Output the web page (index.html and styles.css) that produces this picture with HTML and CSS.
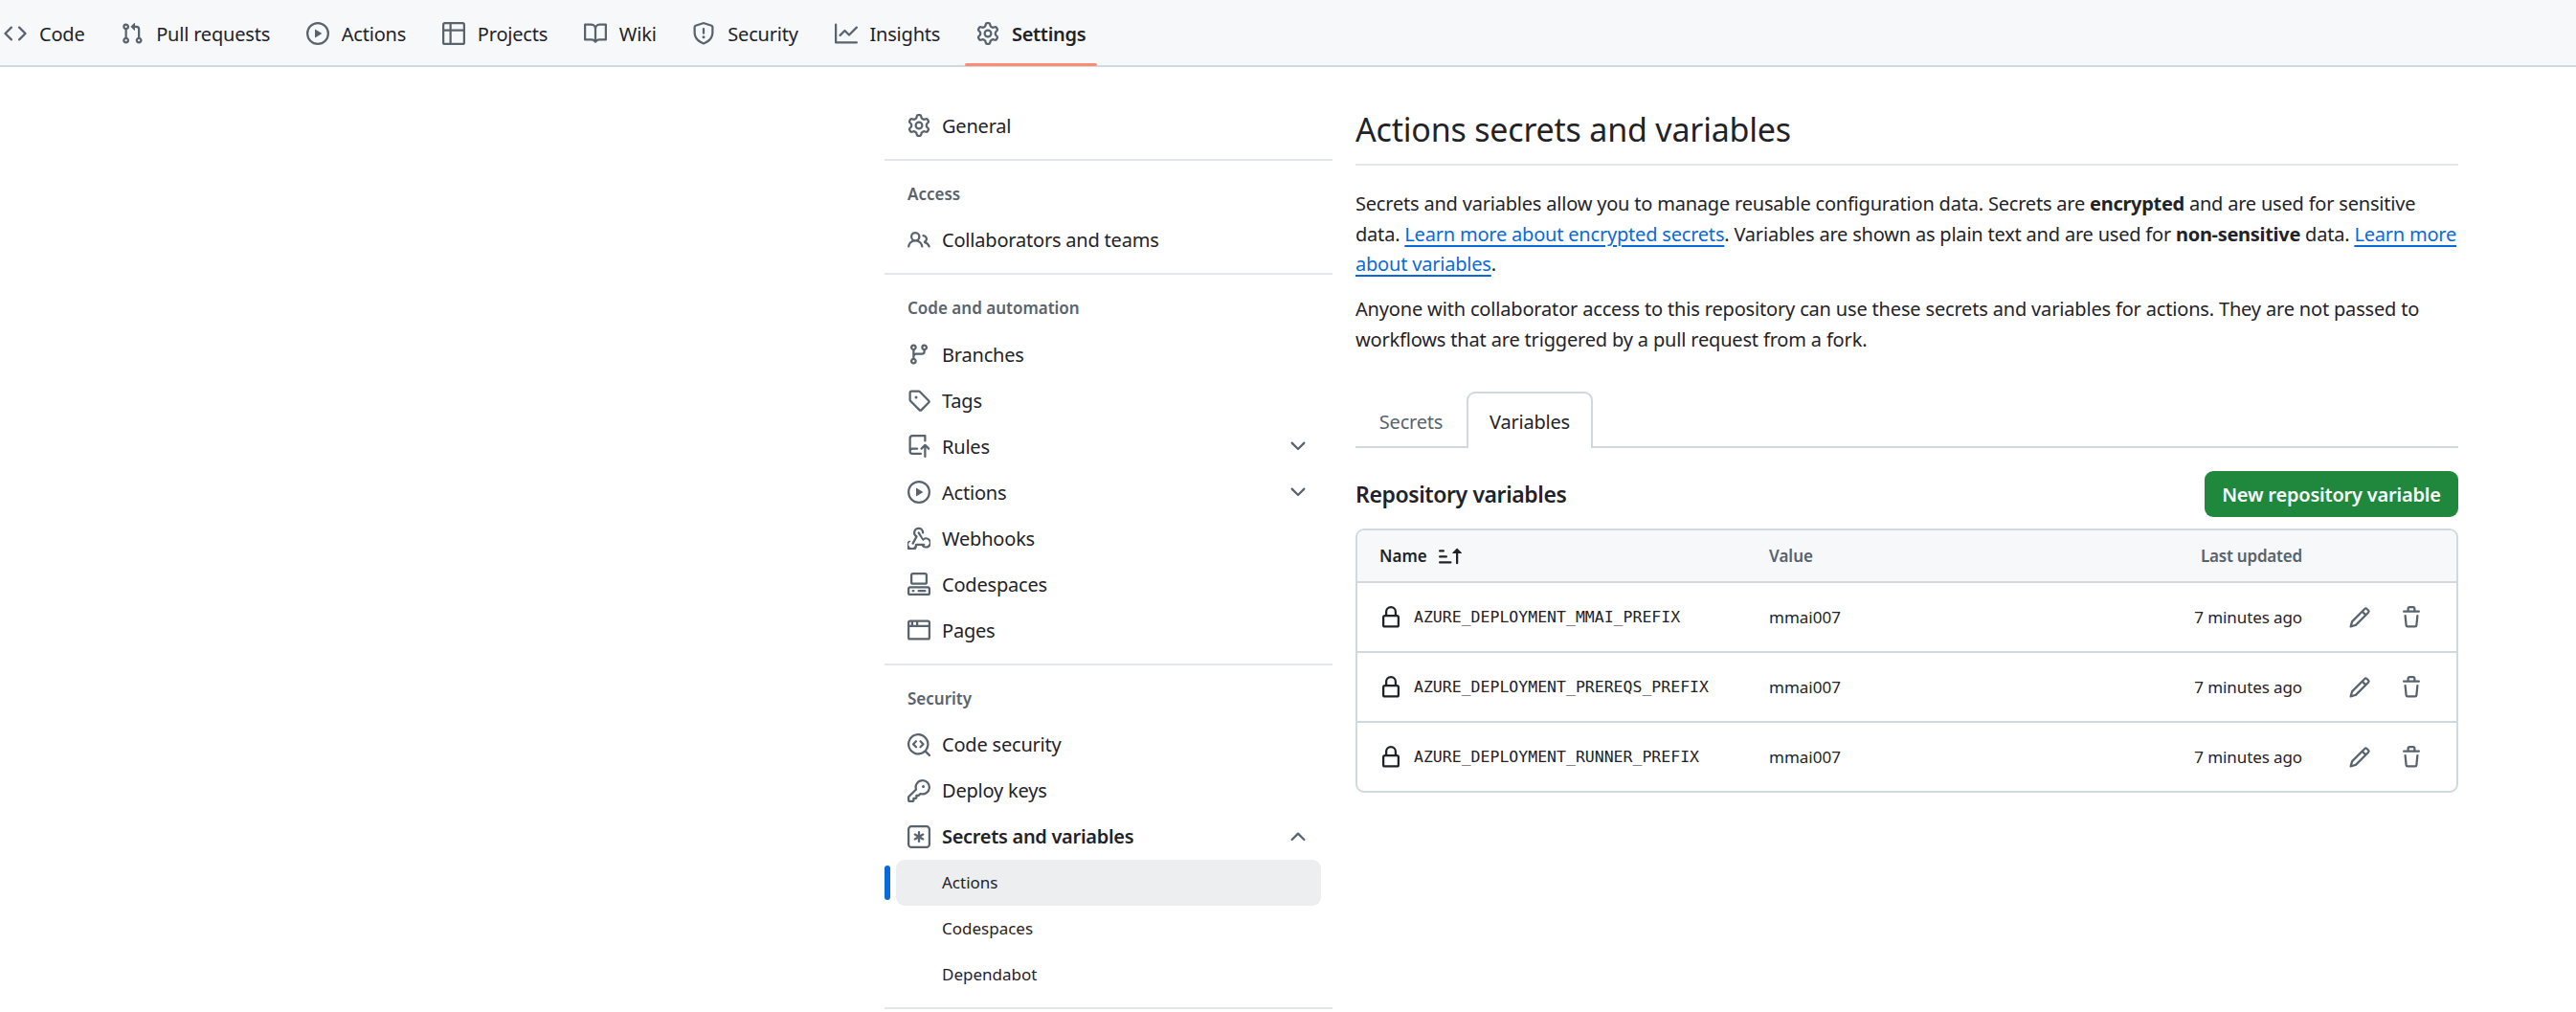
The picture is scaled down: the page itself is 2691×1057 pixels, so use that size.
FILE: index.html
```html
<!DOCTYPE html>
<html lang="en">
<head>
<meta charset="utf-8">
<title>Actions secrets and variables</title>
<link rel="stylesheet" href="styles.css">
</head>
<body>
<svg class="sprite" aria-hidden="true">
<symbol id="i-code" viewBox="0 0 16 16"><path d="m11.28 3.22 4.25 4.25a.75.75 0 0 1 0 1.06l-4.25 4.25a.749.749 0 0 1-1.275-.326.749.749 0 0 1 .215-.734L13.94 8l-3.72-3.72a.749.749 0 0 1 .326-1.275.749.749 0 0 1 .734.215Zm-6.56 0a.751.751 0 0 1 1.042.018.751.751 0 0 1 .018 1.042L2.06 8l3.72 3.72a.749.749 0 0 1-.326 1.275.749.749 0 0 1-.734-.215L.47 8.53a.75.75 0 0 1 0-1.06Z"/></symbol>
<symbol id="i-pr" viewBox="0 0 16 16"><path d="M1.5 3.25a2.25 2.25 0 1 1 3 2.122v5.256a2.251 2.251 0 1 1-1.5 0V5.372A2.25 2.25 0 0 1 1.5 3.25Zm5.677-.177L9.573.677A.25.25 0 0 1 10 .854V2.5h1A2.5 2.5 0 0 1 13.5 5v5.628a2.251 2.251 0 1 1-1.5 0V5a1 1 0 0 0-1-1h-1v1.646a.25.25 0 0 1-.427.177L7.177 3.427a.25.25 0 0 1 0-.354ZM3.75 2.5a.75.75 0 1 0 0 1.5.75.75 0 0 0 0-1.5Zm0 9.5a.75.75 0 1 0 0 1.5.75.75 0 0 0 0-1.5Zm8.25.75a.75.75 0 1 0 1.5 0 .75.75 0 0 0-1.5 0Z"/></symbol>
<symbol id="i-play" viewBox="0 0 16 16"><path d="M8 0a8 8 0 1 1 0 16A8 8 0 0 1 8 0ZM1.5 8a6.5 6.5 0 1 0 13 0 6.5 6.5 0 0 0-13 0Zm4.879-2.773 4.264 2.559a.25.25 0 0 1 0 .428l-4.264 2.559A.25.25 0 0 1 6 10.559V5.442a.25.25 0 0 1 .379-.215Z"/></symbol>
<symbol id="i-table" viewBox="0 0 16 16"><path d="M0 1.75C0 .784.784 0 1.75 0h12.5C15.216 0 16 .784 16 1.75v12.5A1.75 1.75 0 0 1 14.25 16H1.75A1.75 1.75 0 0 1 0 14.25ZM6.5 6.5v8h7.75a.25.25 0 0 0 .25-.25V6.5Zm8-1.5V1.75a.25.25 0 0 0-.25-.25H6.5V5Zm-13 1.5v7.75c0 .138.112.25.25.25H5v-8ZM5 5V1.5H1.75a.25.25 0 0 0-.25.25V5Z"/></symbol>
<symbol id="i-book" viewBox="0 0 16 16"><path d="M0 1.75A.75.75 0 0 1 .75 1h4.253c1.227 0 2.317.59 3 1.501A3.743 3.743 0 0 1 11.006 1h4.245a.75.75 0 0 1 .75.75v10.5a.75.75 0 0 1-.75.75h-4.507a2.25 2.25 0 0 0-1.591.659l-.622.621a.75.75 0 0 1-1.06 0l-.622-.621A2.25 2.25 0 0 0 5.258 13H.75a.75.75 0 0 1-.75-.75Zm7.251 10.324.004-5.073-.002-2.253A2.25 2.25 0 0 0 5.003 2.5H1.5v9h3.757a3.75 3.75 0 0 1 1.994.574ZM8.755 4.75l-.004 7.322a3.752 3.752 0 0 1 1.992-.572H14.5v-9h-3.495a2.25 2.25 0 0 0-2.25 2.25Z"/></symbol>
<symbol id="i-shield" viewBox="0 0 16 16"><path d="M7.467.133a1.748 1.748 0 0 1 1.066 0l5.25 1.68A1.75 1.75 0 0 1 15 3.48V7c0 1.566-.32 3.182-1.303 4.682-.983 1.498-2.585 2.813-5.032 3.855a1.697 1.697 0 0 1-1.33 0c-2.447-1.042-4.049-2.357-5.032-3.855C1.32 10.182 1 8.566 1 7V3.48a1.75 1.75 0 0 1 1.217-1.667Zm.61 1.429a.25.25 0 0 0-.153 0l-5.25 1.68a.25.25 0 0 0-.174.238V7c0 1.358.275 2.666 1.057 3.86.784 1.194 2.121 2.34 4.366 3.297a.196.196 0 0 0 .154 0c2.245-.956 3.582-2.104 4.366-3.298C13.225 9.666 13.5 8.36 13.5 7V3.48a.251.251 0 0 0-.174-.237l-5.25-1.68ZM8.75 4.75v3a.75.75 0 0 1-1.5 0v-3a.75.75 0 0 1 1.5 0ZM9 10.5a1 1 0 1 1-2 0 1 1 0 0 1 2 0Z"/></symbol>
<symbol id="i-graph" viewBox="0 0 16 16"><path d="M1.5 1.75V13.5h13.75a.75.75 0 0 1 0 1.5H.75a.75.75 0 0 1-.75-.75V1.75a.75.75 0 0 1 1.5 0Zm14.28 2.53-5.25 5.25a.75.75 0 0 1-1.06 0L7 7.06 4.28 9.78a.751.751 0 0 1-1.042-.018.751.751 0 0 1-.018-1.042l3.25-3.25a.75.75 0 0 1 1.06 0L10 7.94l4.72-4.72a.751.751 0 0 1 1.042.018.751.751 0 0 1 .018 1.042Z"/></symbol>
<symbol id="i-gear" viewBox="0 0 16 16"><path d="M8 0a8.2 8.2 0 0 1 .701.031C9.444.095 9.99.645 10.16 1.29l.288 1.107c.018.066.079.158.212.224.231.114.454.243.668.386.123.082.233.09.299.071l1.103-.303c.644-.176 1.392.021 1.82.63.27.385.506.792.704 1.218.315.675.111 1.422-.364 1.891l-.814.806c-.049.048-.098.147-.088.294.016.257.016.515 0 .772-.01.147.038.246.088.294l.814.806c.475.469.679 1.216.364 1.891a7.977 7.977 0 0 1-.704 1.217c-.428.61-1.176.807-1.82.63l-1.102-.302c-.067-.019-.177-.011-.3.071a5.909 5.909 0 0 1-.668.386c-.133.066-.194.158-.211.224l-.29 1.106c-.168.646-.715 1.196-1.458 1.26a8.006 8.006 0 0 1-1.402 0c-.743-.064-1.289-.614-1.458-1.26l-.289-1.106c-.018-.066-.079-.158-.212-.224a5.738 5.738 0 0 1-.668-.386c-.123-.082-.233-.09-.299-.071l-1.103.303c-.644.176-1.392-.021-1.82-.63a8.12 8.12 0 0 1-.704-1.218c-.315-.675-.111-1.422.363-1.891l.815-.806c.05-.048.098-.147.088-.294a6.214 6.214 0 0 1 0-.772c.01-.147-.038-.246-.088-.294l-.815-.806C.635 6.045.431 5.298.746 4.623a7.92 7.92 0 0 1 .704-1.217c.428-.61 1.176-.807 1.82-.63l1.102.302c.067.019.177.011.3-.071.214-.143.437-.272.668-.386.133-.066.194-.158.211-.224l.29-1.106C6.009.645 6.556.095 7.299.03 7.53.01 7.764 0 8 0Zm-.571 1.525c-.036.003-.108.036-.137.146l-.289 1.105c-.147.561-.549.967-.998 1.189-.173.086-.34.183-.5.29-.417.278-.97.423-1.529.27l-1.103-.303c-.109-.03-.175.016-.195.045-.22.312-.412.644-.573.99-.014.031-.021.11.059.19l.815.806c.411.406.562.957.53 1.456a4.709 4.709 0 0 0 0 .582c.032.499-.119 1.05-.53 1.456l-.815.806c-.081.08-.073.159-.059.19.162.346.353.677.573.989.02.03.085.076.195.046l1.102-.303c.56-.153 1.113-.008 1.53.27.161.107.328.204.501.29.447.222.85.629.997 1.189l.289 1.105c.029.109.101.143.137.146a6.6 6.6 0 0 0 1.142 0c.036-.003.108-.036.137-.146l.289-1.105c.147-.561.549-.967.998-1.189.173-.086.34-.183.5-.29.417-.278.97-.423 1.529-.27l1.103.303c.109.029.175-.016.195-.045.22-.313.411-.644.573-.99.014-.031.021-.11-.059-.19l-.815-.806c-.411-.406-.562-.957-.53-1.456a4.709 4.709 0 0 0 0-.582c-.032-.499.119-1.05.53-1.456l.815-.806c.081-.08.073-.159.059-.19a6.464 6.464 0 0 0-.573-.989c-.02-.03-.085-.076-.195-.046l-1.102.303c-.56.153-1.113.008-1.53-.27a4.44 4.44 0 0 0-.501-.29c-.447-.222-.85-.629-.997-1.189l-.289-1.105c-.029-.11-.101-.143-.137-.146a6.6 6.6 0 0 0-1.142 0ZM11 8a3 3 0 1 1-6 0 3 3 0 0 1 6 0ZM9.5 8a1.5 1.5 0 1 0-3.001.001A1.5 1.5 0 0 0 9.5 8Z"/></symbol>
<symbol id="i-people" viewBox="0 0 16 16"><path d="M2 5.5a3.5 3.5 0 1 1 5.898 2.549 5.508 5.508 0 0 1 3.034 4.084.75.75 0 1 1-1.482.235 4 4 0 0 0-7.9 0 .75.75 0 0 1-1.482-.236A5.507 5.507 0 0 1 3.102 8.05 3.493 3.493 0 0 1 2 5.5ZM11 4a3.001 3.001 0 0 1 2.22 5.018 5.01 5.01 0 0 1 2.56 3.012.749.749 0 0 1-.885.954.752.752 0 0 1-.549-.514 3.507 3.507 0 0 0-2.522-2.372.75.75 0 0 1-.574-.73v-.352a.75.75 0 0 1 .416-.672A1.5 1.5 0 0 0 11 5.5.75.75 0 0 1 11 4Zm-5.5-.5a2 2 0 1 0-.001 3.999A2 2 0 0 0 5.5 3.5Z"/></symbol>
<symbol id="i-branch" viewBox="0 0 16 16"><path d="M9.5 3.25a2.25 2.25 0 1 1 3 2.122V6A2.5 2.5 0 0 1 10 8.5H6a1 1 0 0 0-1 1v1.128a2.251 2.251 0 1 1-1.5 0V5.372a2.25 2.25 0 1 1 1.5 0v1.836A2.493 2.493 0 0 1 6 7h4a1 1 0 0 0 1-1v-.628A2.25 2.25 0 0 1 9.5 3.25Zm-6 0a.75.75 0 1 0 1.5 0 .75.75 0 0 0-1.5 0Zm8.25-.75a.75.75 0 1 0 0 1.5.75.75 0 0 0 0-1.5ZM4.25 12a.75.75 0 1 0 0 1.5.75.75 0 0 0 0-1.5Z"/></symbol>
<symbol id="i-tag" viewBox="0 0 16 16"><path d="M1 7.775V2.75C1 1.784 1.784 1 2.75 1h5.025c.464 0 .91.184 1.238.513l6.25 6.25a1.75 1.75 0 0 1 0 2.474l-5.026 5.026a1.75 1.75 0 0 1-2.474 0l-6.25-6.25A1.752 1.752 0 0 1 1 7.775Zm1.5 0c0 .066.026.13.073.177l6.25 6.25a.25.25 0 0 0 .354 0l5.025-5.025a.25.25 0 0 0 0-.354l-6.25-6.25a.25.25 0 0 0-.177-.073H2.75a.25.25 0 0 0-.25.25ZM6 5a1 1 0 1 1 0 2 1 1 0 0 1 0-2Z"/></symbol>
<symbol id="i-rules" viewBox="0 0 16 16"><path d="M1 2.5A2.5 2.5 0 0 1 3.5 0h8.75a.75.75 0 0 1 .75.75v3.5a.75.75 0 0 1-1.5 0V1.5h-8a1 1 0 0 0-1 1v6.708A2.493 2.493 0 0 1 3.5 9h3.25a.75.75 0 0 1 0 1.5H3.5a1 1 0 0 0 0 2h5.75a.75.75 0 0 1 0 1.5H3.5A2.5 2.5 0 0 1 1 11.5Zm13.23 7.79h-.001l-1.224-1.224v6.184a.75.75 0 0 1-1.5 0V9.066L10.28 10.29a.75.75 0 0 1-1.06-1.061l2.505-2.504a.75.75 0 0 1 1.06 0L15.29 9.23a.751.751 0 0 1-.018 1.042.751.751 0 0 1-1.042.018Z"/></symbol>
<symbol id="i-webhook" viewBox="0 0 16 16"><path d="M5.5 4.25a2.25 2.25 0 0 1 4.5 0 .75.75 0 0 0 1.5 0 3.75 3.75 0 1 0-6.14 2.889l-2.272 4.258a.75.75 0 0 0 1.324.706L7 7.25a.75.75 0 0 0-.309-1.015A2.25 2.25 0 0 1 5.5 4.25Z"/><path d="M7.364 3.607a.75.75 0 0 1 1.025.27l2.508 4.25a3.75 3.75 0 1 1-.832 5.623.75.75 0 0 1 1.121-.996 2.25 2.25 0 1 0 .167-3.173l-.011.01a.75.75 0 0 1-1.145-.18L7.094 4.632a.75.75 0 0 1 .27-1.025Z"/><path d="M2.301 9.52a.75.75 0 0 1-.347 1.003A2.25 2.25 0 1 0 5.25 12.5a.75.75 0 0 1 .75-.75h5.5a.75.75 0 0 1 0 1.5H6.674a3.751 3.751 0 1 1-5.376-3.383.75.75 0 0 1 1.003.347Z"/></symbol>
<symbol id="i-codespaces" viewBox="0 0 16 16"><path d="M0 11.25c0-.966.784-1.75 1.75-1.75h12.5c.966 0 1.75.784 1.75 1.75v3A1.75 1.75 0 0 1 14.25 16H1.75A1.75 1.75 0 0 1 0 14.25Zm2-9.5C2 .784 2.784 0 3.75 0h8.5C13.216 0 14 .784 14 1.75v5a1.75 1.75 0 0 1-1.75 1.75h-8.5A1.75 1.75 0 0 1 2 6.75Zm1.75-.25a.25.25 0 0 0-.25.25v5c0 .138.112.25.25.25h8.5a.25.25 0 0 0 .25-.25v-5a.25.25 0 0 0-.25-.25Zm-2 9.5a.25.25 0 0 0-.25.25v3c0 .138.112.25.25.25h12.5a.25.25 0 0 0 .25-.25v-3a.25.25 0 0 0-.25-.25Z"/><path d="M7 12.75a.75.75 0 0 1 .75-.75h4.5a.75.75 0 0 1 0 1.5h-4.5a.75.75 0 0 1-.75-.75Zm-4 0a.75.75 0 0 1 .75-.75h.5a.75.75 0 0 1 0 1.5h-.5a.75.75 0 0 1-.75-.75Z"/></symbol>
<symbol id="i-browser" viewBox="0 0 16 16"><path fill-rule="evenodd" d="M0 2.75C0 1.784.784 1 1.75 1h12.5c.966 0 1.75.784 1.75 1.75v10.5A1.75 1.75 0 0 1 14.25 15H1.75A1.75 1.75 0 0 1 0 13.25ZM14.5 6h-13v7.25c0 .138.112.25.25.25h12.5a.25.25 0 0 0 .25-.25Zm-7-3.5v2h7V2.75a.25.25 0 0 0-.25-.25ZM4 2.5v2h2v-2Zm-2.5.25V4.5h1v-2h-.75a.25.25 0 0 0-.25.25Z"/></symbol>
<symbol id="i-codescan" viewBox="0 0 16 16"><path d="M8.47 4.97a.75.75 0 0 0 0 1.06L9.94 7.5 8.47 8.97a.75.75 0 1 0 1.06 1.06l2-2a.75.75 0 0 0 0-1.06l-2-2a.75.75 0 0 0-1.06 0ZM6.53 6.03a.75.75 0 0 0-1.06-1.06l-2 2a.75.75 0 0 0 0 1.06l2 2a.75.75 0 1 0 1.06-1.06L5.06 7.5l1.47-1.47Z"/><path d="M12.246 13.307a7.501 7.501 0 1 1 1.06-1.06l2.474 2.473a.749.749 0 0 1-.326 1.275.749.749 0 0 1-.734-.215ZM1.5 7.5a6.002 6.002 0 0 0 3.608 5.504 6.002 6.002 0 0 0 6.486-1.117.748.748 0 0 1 .293-.293A6 6 0 1 0 1.5 7.5Z"/></symbol>
<symbol id="i-key" viewBox="0 0 16 16"><path d="M10.5 0a5.499 5.499 0 1 1-1.288 10.848l-.932.932a.749.749 0 0 1-.53.22H7v.75a.749.749 0 0 1-.22.53l-.5.5a.749.749 0 0 1-.53.22H5v.75a.749.749 0 0 1-.22.53l-.5.5a.749.749 0 0 1-.53.22h-2A1.75 1.75 0 0 1 0 14.25v-2c0-.199.079-.389.22-.53l4.932-4.932A5.5 5.5 0 0 1 10.5 0Zm-4 5.5c-.001.431.069.86.205 1.269a.75.75 0 0 1-.181.768L1.5 12.56v1.69c0 .138.112.25.25.25h1.69l.06-.06v-1.19a.75.75 0 0 1 .75-.75h1.19l.06-.06v-1.19a.75.75 0 0 1 .75-.75h1.19l1.023-1.025a.75.75 0 0 1 .768-.18A4 4 0 1 0 6.5 5.5ZM11 6a1 1 0 1 1 0-2 1 1 0 0 1 0 2Z"/></symbol>
<symbol id="i-asterisk" viewBox="0 0 16 16"><path d="M0 2.75A2.75 2.75 0 0 1 2.75 0h10.5A2.75 2.75 0 0 1 16 2.75v10.5A2.75 2.75 0 0 1 13.25 16H2.75A2.75 2.75 0 0 1 0 13.25ZM2.75 1.5c-.69 0-1.25.56-1.25 1.25v10.5c0 .69.56 1.25 1.25 1.25h10.5c.69 0 1.25-.56 1.25-1.25V2.75c0-.69-.56-1.25-1.25-1.25Z"/><path d="M8 4a.75.75 0 0 1 .75.75V6.7l1.69-.975a.75.75 0 0 1 .75 1.3L9.5 8l1.69.976a.75.75 0 0 1-.75 1.298L8.75 9.3v1.951a.75.75 0 0 1-1.5 0V9.299l-1.69.976a.75.75 0 0 1-.75-1.3L6.5 8l-1.69-.975a.75.75 0 0 1 .75-1.3l1.69.976V4.75A.75.75 0 0 1 8 4Z"/></symbol>
<symbol id="i-down" viewBox="0 0 16 16"><path d="M12.78 5.22a.749.749 0 0 1 0 1.06l-4.25 4.25a.749.749 0 0 1-1.06 0L3.22 6.28a.749.749 0 1 1 1.06-1.06L8 8.939l3.72-3.719a.749.749 0 0 1 1.06 0Z"/></symbol>
<symbol id="i-up" viewBox="0 0 16 16"><path d="M3.22 10.53a.749.749 0 0 1 0-1.06l4.25-4.25a.749.749 0 0 1 1.06 0l4.25 4.25a.749.749 0 1 1-1.06 1.06L8 6.811 4.28 10.53a.749.749 0 0 1-1.06 0Z"/></symbol>
<symbol id="i-lock" viewBox="0 0 16 16"><path d="M4 4a4 4 0 0 1 8 0v2h.25c.966 0 1.75.784 1.75 1.75v5.5A1.75 1.75 0 0 1 12.25 15h-8.5A1.75 1.75 0 0 1 2 13.25v-5.5C2 6.784 2.784 6 3.75 6H4Zm6.5 2V4a2.5 2.5 0 1 0-5 0v2ZM3.75 7.5a.25.25 0 0 0-.25.25v5.5c0 .138.112.25.25.25h8.5a.25.25 0 0 0 .25-.25v-5.5a.25.25 0 0 0-.25-.25Z"/></symbol>
<symbol id="i-pencil" viewBox="0 0 16 16"><path d="M11.013 1.427a1.75 1.75 0 0 1 2.474 0l1.086 1.086a1.75 1.75 0 0 1 0 2.474l-8.61 8.61c-.21.21-.47.364-.756.445l-3.251.93a.75.75 0 0 1-.927-.928l.929-3.25c.081-.286.235-.547.445-.758l8.61-8.61Zm.176 4.823L9.75 4.81l-6.286 6.287a.253.253 0 0 0-.064.108l-.558 1.953 1.953-.558a.253.253 0 0 0 .108-.064Zm1.238-3.763a.25.25 0 0 0-.354 0L10.811 3.75l1.439 1.44 1.263-1.263a.25.25 0 0 0 0-.354Z"/></symbol>
<symbol id="i-trash" viewBox="0 0 16 16"><path d="M11 1.75V3h2.25a.75.75 0 0 1 0 1.5H2.75a.75.75 0 0 1 0-1.5H5V1.75C5 .784 5.784 0 6.75 0h2.5C10.216 0 11 .784 11 1.75ZM4.496 6.675l.66 6.6a.25.25 0 0 0 .249.225h5.19a.25.25 0 0 0 .249-.225l.66-6.6a.75.75 0 0 1 1.492.149l-.66 6.6A1.748 1.748 0 0 1 10.595 15h-5.19a1.75 1.75 0 0 1-1.741-1.575l-.66-6.6a.75.75 0 1 1 1.492-.15ZM6.5 1.75V3h3V1.75a.25.25 0 0 0-.25-.25h-2.5a.25.25 0 0 0-.25.25Z"/></symbol>
<symbol id="i-sort" viewBox="0 0 16 16"><path d="m12.927 2.573 3 3A.25.25 0 0 1 15.75 6H13.5v6.75a.75.75 0 0 1-1.5 0V6H9.75a.25.25 0 0 1-.177-.427l3-3a.25.25 0 0 1 .354 0ZM0 12.25a.75.75 0 0 1 .75-.75h7.5a.75.75 0 0 1 0 1.5H.75a.75.75 0 0 1-.75-.75Zm0-4a.75.75 0 0 1 .75-.75h4.5a.75.75 0 0 1 0 1.5H.75A.75.75 0 0 1 0 8.25Zm0-4a.75.75 0 0 1 .75-.75h2.5a.75.75 0 0 1 0 1.5H.75A.75.75 0 0 1 0 4.25Z"/></symbol>
</svg>

<nav class="repo-nav">
  <a class="tab"><svg class="icon"><use href="#i-code"/></svg>Code</a>
  <a class="tab"><svg class="icon"><use href="#i-pr"/></svg>Pull requests</a>
  <a class="tab"><svg class="icon"><use href="#i-play"/></svg>Actions</a>
  <a class="tab"><svg class="icon"><use href="#i-table"/></svg>Projects</a>
  <a class="tab"><svg class="icon"><use href="#i-book"/></svg>Wiki</a>
  <a class="tab"><svg class="icon"><use href="#i-shield"/></svg>Security</a>
  <a class="tab"><svg class="icon"><use href="#i-graph"/></svg>Insights</a>
  <a class="tab tab-selected"><svg class="icon"><use href="#i-gear"/></svg>Settings</a>
</nav>

<div class="layout">
  <aside class="side">
    <div class="group group-first">
      <a class="row"><svg class="icon"><use href="#i-gear"/></svg>General</a>
    </div>
    <div class="group">
      <h3 class="group-title">Access</h3>
      <a class="row"><svg class="icon"><use href="#i-people"/></svg>Collaborators and teams</a>
    </div>
    <div class="group">
      <h3 class="group-title">Code and automation</h3>
      <a class="row"><svg class="icon"><use href="#i-branch"/></svg>Branches</a>
      <a class="row"><svg class="icon"><use href="#i-tag"/></svg>Tags</a>
      <a class="row"><svg class="icon"><use href="#i-rules"/></svg>Rules<svg class="icon chev"><use href="#i-down"/></svg></a>
      <a class="row"><svg class="icon"><use href="#i-play"/></svg>Actions<svg class="icon chev"><use href="#i-down"/></svg></a>
      <a class="row"><svg class="icon"><use href="#i-webhook"/></svg>Webhooks</a>
      <a class="row"><svg class="icon"><use href="#i-codespaces"/></svg>Codespaces</a>
      <a class="row"><svg class="icon"><use href="#i-browser"/></svg>Pages</a>
    </div>
    <div class="group">
      <h3 class="group-title">Security</h3>
      <a class="row"><svg class="icon"><use href="#i-codescan"/></svg>Code security</a>
      <a class="row"><svg class="icon"><use href="#i-key"/></svg>Deploy keys</a>
      <a class="row row-open"><svg class="icon"><use href="#i-asterisk"/></svg>Secrets and variables<svg class="icon chev"><use href="#i-up"/></svg></a>
      <a class="row sub sub-active">Actions</a>
      <a class="row sub">Codespaces</a>
      <a class="row sub">Dependabot</a>
    </div>
    <div class="group group-last"></div>
  </aside>

  <main class="main">
    <h1 class="title">Actions secrets and variables</h1>
    <p class="lead">Secrets and variables allow you to manage reusable configuration data. Secrets are <b>encrypted</b> and are used for sensitive<br>data. <a class="link">Learn more about encrypted secrets</a>. Variables are shown as plain text and are used for <b>non-sensitive</b> data. <a class="link">Learn more<br>about variables</a>.</p>
    <p class="lead lead-2">Anyone with collaborator access to this repository can use these secrets and variables for actions. They are not passed to<br>workflows that are triggered by a pull request from a fork.</p>

    <div class="tabs">
      <a class="t">Secrets</a>
      <a class="t t-on">Variables</a>
    </div>

    <div class="head">
      <h2 class="head-title">Repository variables</h2>
      <a class="btn">New repository variable</a>
    </div>

    <div class="tbl">
      <div class="tr th">
        <div class="c-name th-name">Name<svg class="icon sort"><use href="#i-sort"/></svg></div>
        <div class="c-val">Value</div>
        <div class="c-time">Last updated</div>
        <div class="c-act"></div>
      </div>
      <div class="tr">
        <div class="c-name"><svg class="icon lock"><use href="#i-lock"/></svg><code class="var">AZURE_DEPLOYMENT_MMAI_PREFIX</code></div>
        <div class="c-val">mmai007</div>
        <div class="c-time">7 minutes ago</div>
        <div class="c-act"><svg class="icon"><use href="#i-pencil"/></svg><svg class="icon"><use href="#i-trash"/></svg></div>
      </div>
      <div class="tr">
        <div class="c-name"><svg class="icon lock"><use href="#i-lock"/></svg><code class="var">AZURE_DEPLOYMENT_PREREQS_PREFIX</code></div>
        <div class="c-val">mmai007</div>
        <div class="c-time">7 minutes ago</div>
        <div class="c-act"><svg class="icon"><use href="#i-pencil"/></svg><svg class="icon"><use href="#i-trash"/></svg></div>
      </div>
      <div class="tr">
        <div class="c-name"><svg class="icon lock"><use href="#i-lock"/></svg><code class="var">AZURE_DEPLOYMENT_RUNNER_PREFIX</code></div>
        <div class="c-val">mmai007</div>
        <div class="c-time">7 minutes ago</div>
        <div class="c-act"><svg class="icon"><use href="#i-pencil"/></svg><svg class="icon"><use href="#i-trash"/></svg></div>
      </div>
    </div>
  </main>
</div>
</body>
</html>
```
FILE: styles.css
```css
* { box-sizing: border-box; }
html, body { margin: 0; padding: 0; }
body {
  height: 1057px;
  overflow: hidden;
  background: #fff;
  color: #1f2328;
  font-family: "Noto Sans", "Open Sans", sans-serif;
  font-size: 20px;
  letter-spacing: -0.2px;
}
a { color: inherit; text-decoration: none; }
h1, h2, h3, p { margin: 0; }
.sprite { display: none; }
.icon { width: 24px; height: 24px; fill: #59636e; flex: none; display: block; }

.repo-nav {
  display: flex;
  height: 70px;
  gap: 13.7px;
  background: #f6f8fa;
  border-bottom: 2px solid #d1d9e0;
}
.tab {
  display: flex;
  align-items: center;
  height: 68px;
  padding: 2px 12px 0 4px;
  color: #1f2328;
  white-space: nowrap;
  position: relative;
}
.tab + .tab { padding-left: 12px; }
.tab .icon { margin-right: 13px; }
.tab-selected { font-weight: 600; letter-spacing: -0.3px; }
.tab-selected::after {
  content: "";
  position: absolute;
  left: 0;
  right: 0;
  bottom: -1px;
  height: 3px;
  border-radius: 2px;
  background: #fd8c73;
}

.layout {
  display: grid;
  grid-template-columns: 468px 1152px;
  column-gap: 24px;
  padding-left: 924px;
}

.side { padding-top: 37px; }
.group { border-top: 2px solid #e3e7eb; margin-top: 10.5px; padding-top: 22px; }
.group-first { border-top: 0; margin-top: 0; padding-top: 0; }
.group-last { padding-top: 0; }
.group-title {
  font-size: 17px;
  font-weight: 600;
  letter-spacing: 0;
  line-height: 24px;
  height: 37px;
  padding: 1px 0 0 24px;
  color: #59636e;
}
.row {
  display: flex;
  align-items: center;
  position: relative;
  height: 48px;
  margin: 0 12px;
  padding: 0 12px;
  border-radius: 9px;
}
.row > .icon:first-child { margin-right: 12px; }
.chev { margin-left: auto; }
.row-open { font-weight: 600; letter-spacing: -0.3px; }
.sub { font-size: 17px; letter-spacing: 0; padding-left: 48px; }
.sub-active { background: #eceef0; }
.sub-active::before {
  content: "";
  position: absolute;
  left: -12px;
  top: 6px;
  width: 6px;
  height: 36px;
  border-radius: 3px;
  background: #0969da;
}

.main { padding-top: 38px; }
.title {
  font-size: 34px;
  font-weight: 400;
  line-height: 54px;
  height: 65px;
  border-bottom: 2px solid #e3e7eb;
}
.lead { margin-top: 24px; line-height: 31.5px; white-space: nowrap; }
.lead b { letter-spacing: -0.3px; }
.lead-2 { margin-top: 15.5px; letter-spacing: -0.17px; }
.link {
  color: #0969da;
  text-decoration: underline;
  text-decoration-thickness: 2px;
  text-underline-offset: 4px;
}

.tabs {
  display: flex;
  height: 59px;
  margin-top: 39px;
  border-bottom: 2px solid #d1d9e0;
}
.t {
  display: flex;
  align-items: center;
  justify-content: center;
  width: 116px;
  height: 59px;
  padding-top: 4px;
  color: #59636e;
}
.t-on {
  width: 132px;
  color: #1f2328;
  background: #fff;
  border: 2px solid #d1d9e0;
  border-bottom: 0;
  border-radius: 9px 9px 0 0;
  padding-top: 2px;
}

.head {
  display: flex;
  align-items: center;
  justify-content: space-between;
  margin-top: 24px;
}
.head-title { font-size: 23px; font-weight: 600; letter-spacing: -0.4px; }
.btn {
  display: flex;
  align-items: center;
  justify-content: center;
  width: 265px;
  height: 48px;
  border-radius: 9px;
  background: #1f883d;
  color: #fff;
  font-weight: 600;
}

.tbl {
  margin-top: 12px;
  border: 2px solid #d1d9e0;
  border-radius: 9px;
  overflow: hidden;
  font-size: 17px;
  letter-spacing: 0;
}
.tr {
  display: grid;
  grid-template-columns: 430px 1fr 200px 161px;
  align-items: center;
  height: 73px;
  border-top: 2px solid #d1d9e0;
}
.th {
  height: 53px;
  border-top: 0;
  background: #f6f8fa;
  font-weight: 600;
  color: #59636e;
}
.c-name { display: flex; align-items: center; padding-left: 23px; }
.th-name { color: #1f2328; }
.sort { margin-left: 12px; fill: #1f2328; }
.lock { fill: #1f2328; margin-right: 12px; }
.var { font-family: "DejaVu Sans Mono", monospace; font-size: 16.5px; }
.c-time { text-align: right; letter-spacing: -0.1px; }
.th .c-time { letter-spacing: -0.2px; }
.c-act { display: flex; justify-content: flex-end; gap: 30px; padding-right: 35px; }
```
